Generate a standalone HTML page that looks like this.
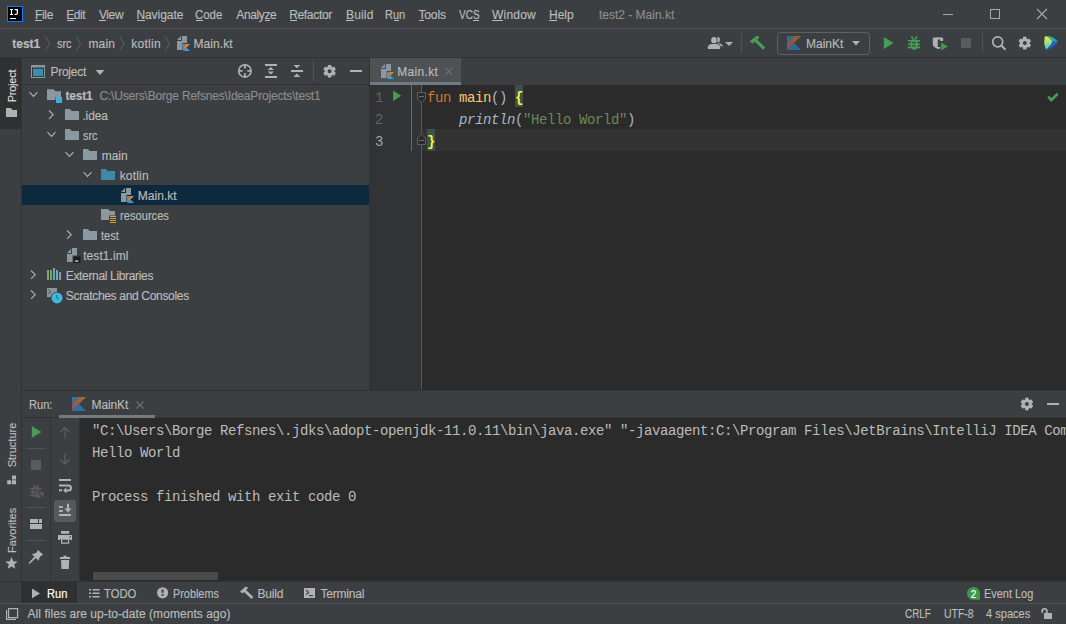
<!DOCTYPE html>
<html><head><meta charset="utf-8">
<style>
*{margin:0;padding:0;box-sizing:border-box}
html,body{width:1066px;height:624px;overflow:hidden;background:#3C3F41;font-family:"Liberation Sans",sans-serif;font-size:12px;color:#BBBBBB}
.a{position:absolute}
.t{position:absolute;line-height:14px;white-space:nowrap;-webkit-text-stroke:0.15px currentColor}
.m{position:absolute;font-family:"Liberation Mono",monospace;font-size:13px;line-height:22px;white-space:pre;color:#A9B7C6}
u{text-decoration:none;border-bottom:1px solid currentColor}
svg{position:absolute;overflow:visible}
</style></head><body>
<svg width="0" height="0" style="position:absolute">
<defs>
 <linearGradient id="kg" x1="1" y1="0" x2="0" y2="1"><stop offset="0" stop-color="#F88909"/><stop offset="0.7" stop-color="#EE6C3C"/><stop offset="1" stop-color="#D2459E"/></linearGradient>
 <linearGradient id="kgm" x1="1" y1="0" x2="0" y2="1"><stop offset="0" stop-color="#B8762A"/><stop offset="0.55" stop-color="#AE6440"/><stop offset="1" stop-color="#9C4CA6"/></linearGradient>
 <g id="ktf">
  <path d="M7 1H12V8H7.5V15H2V6H7Z" fill="#8B98A0"/>
  <path d="M2 5L6 1V5Z" fill="#8B98A0"/>
  <path d="M8 9h3.5L8 12.5z" fill="#1DA8E8"/>
  <path d="M11.5 9H15L8 16v-3.5z" fill="url(#kg)"/>
  <path d="M8 16l3.5-3.5L15 16z" fill="#1DA8E8"/>
 </g>
 <g id="kbig">
  <path d="M0 0h7L0 7z" fill="#2C80B5"/>
  <path d="M7 0h7L0 14V7z" fill="url(#kgm)"/>
  <path d="M0 14l7-7 7 7z" fill="#2A7DB1"/>
 </g>
<path id="gear" fill-rule="evenodd" d="M-2.19 -4.04 L-1.52 -6.32 L1.52 -6.32 L2.19 -4.04 L2.40 -3.92 L4.71 -4.47 L6.23 -1.85 L4.60 -0.12 L4.60 0.12 L6.23 1.85 L4.71 4.47 L2.40 3.92 L2.19 4.04 L1.52 6.32 L-1.52 6.32 L-2.19 4.04 L-2.40 3.92 L-4.71 4.47 L-6.23 1.85 L-4.60 0.12 L-4.60 -0.12 L-6.23 -1.85 L-4.71 -4.47 L-2.40 -3.92Z M2.0 0 A2.0 2.0 0 1 0 -2.0 0 A2.0 2.0 0 1 0 2.0 0Z"/>
<linearGradient id="jbg" x1="0" y1="0" x2="1" y2="1"><stop offset="0" stop-color="#F5E93B"/><stop offset="0.45" stop-color="#7BD67E"/><stop offset="1" stop-color="#0E8FD8"/></linearGradient>
<path id="fold" d="M0 0H4.8L6.8 2H14V11H0Z"/>
<linearGradient id="jbl" x1="0" y1="0" x2="0" y2="1"><stop offset="0" stop-color="#F4EE3A"/><stop offset="0.5" stop-color="#9FE07A"/><stop offset="1" stop-color="#2ACDE6"/></linearGradient>
<linearGradient id="jbt" x1="0" y1="0" x2="1" y2="1"><stop offset="0" stop-color="#3DD16A"/><stop offset="1" stop-color="#1C90D8"/></linearGradient>
</defs></svg>

<!-- ===== Menu bar ===== -->
<div class="a" style="left:0;top:28px;width:1066px;height:1px;background:#515151"></div>
<div class="a" style="left:7px;top:6px;width:16px;height:16px;background:#000;border:1px solid #087CFA"></div>
<svg style="left:0;top:0" width="1" height="1" fill="#FFFFFF"><path d="M10 9h3v1.1h-0.9v3.8h0.9V15h-3v-1.1h0.9v-3.8H10z"/><path d="M14.6 9h3.4v4q0 2-2 2h-1.4v-1.2h1.3q0.8 0 0.8-0.9v-2.7h-2.1z"/><rect x="10" y="18" width="6" height="1.1"/></svg>
<div class="t" style="left:35.0px;top:8px;letter-spacing:-0.33px">File</div>
<div class="t" style="left:66.2px;top:8px;letter-spacing:-0.4px">Edit</div>
<div class="t" style="left:98.9px;top:8px;letter-spacing:-0.37px">View</div>
<div class="t" style="left:136.4px;top:8px;letter-spacing:-0.06px">Navigate</div>
<div class="t" style="left:195.4px;top:8px;transform:scaleX(0.951);transform-origin:0 0">Code</div>
<div class="t" style="left:236.3px;top:8px;letter-spacing:-0.38px">Analyze</div>
<div class="t" style="left:289.2px;top:8px;letter-spacing:-0.33px">Refactor</div>
<div class="t" style="left:346.0px;top:8px;letter-spacing:0.17px">Build</div>
<div class="t" style="left:385.4px;top:8px;transform:scaleX(0.918);transform-origin:0 0">Run</div>
<div class="t" style="left:418.4px;top:8px;letter-spacing:-0.1px">Tools</div>
<div class="t" style="left:459px;top:8px;transform:scaleX(0.838);transform-origin:0 0">VCS</div>
<div class="t" style="left:492.0px;top:8px;letter-spacing:0.2px">Window</div>
<div class="t" style="left:549.0px;top:8px;letter-spacing:0.0px">Help</div>
<div class="t" style="left:599.0px;top:8px;color:#8C8C8C;letter-spacing:-0.01px">test2 - Main.kt</div>
<div class="a" style="left:35.3px;top:20px;width:6.4px;height:1px;background:#BBBBBB"></div><div class="a" style="left:66.5px;top:20px;width:7.0px;height:1px;background:#BBBBBB"></div><div class="a" style="left:99.2px;top:20px;width:6.8px;height:1px;background:#BBBBBB"></div><div class="a" style="left:136.7px;top:20px;width:8.0px;height:1px;background:#BBBBBB"></div><div class="a" style="left:195.7px;top:20px;width:7.6px;height:1px;background:#BBBBBB"></div><div class="a" style="left:264.7px;top:20px;width:5.0px;height:1px;background:#BBBBBB"></div><div class="a" style="left:289.5px;top:20px;width:7.7px;height:1px;background:#BBBBBB"></div><div class="a" style="left:346.3px;top:20px;width:7.6px;height:1px;background:#BBBBBB"></div><div class="a" style="left:393.6px;top:20px;width:5.5px;height:1px;background:#BBBBBB"></div><div class="a" style="left:418.7px;top:20px;width:5.3px;height:1px;background:#BBBBBB"></div><div class="a" style="left:473.3px;top:20px;width:6.1px;height:1px;background:#BBBBBB"></div><div class="a" style="left:492.3px;top:20px;width:10.9px;height:1px;background:#BBBBBB"></div><div class="a" style="left:549.3px;top:20px;width:8.1px;height:1px;background:#BBBBBB"></div>
<!-- window controls -->
<div class="a" style="left:943px;top:14px;width:10px;height:1px;background:#A8A8A8"></div>
<div class="a" style="left:990px;top:9px;width:10px;height:10px;border:1px solid #A8A8A8"></div>
<svg style="left:1037px;top:9px" width="10" height="10"><path d="M0 0L10 10M10 0L0 10" stroke="#A8A8A8" stroke-width="1.1"/></svg>

<!-- ===== Nav bar ===== -->
<div class="a" style="left:0;top:57px;width:1066px;height:1px;background:#323232"></div>
<div class="t" style="left:12.2px;top:37px;font-weight:bold;letter-spacing:0.02px">test1</div>
<svg style="left:0;top:0" width="1" height="1"><path d="M45.2 36.4l4.5 7.1l-4.5 7.1M76.2 36.4l4.5 7.1l-4.5 7.1M119.5 36.4l4.5 7.1l-4.5 7.1M165 36.4l4.5 7.1l-4.5 7.1" stroke="#5E6060" stroke-width="1" fill="none"/></svg>
<div class="t" style="left:57px;top:37px;transform:scaleX(0.906);transform-origin:0 0">src</div>
<div class="t" style="left:88.4px;top:37px;letter-spacing:0.2px">main</div>
<div class="t" style="left:131.3px;top:37px;letter-spacing:0.26px">kotlin</div>
<svg style="left:175px;top:35px" width="16" height="16"><use href="#ktf"/></svg>
<div class="t" style="left:193.5px;top:37px;letter-spacing:0.07px">Main.kt</div>

<!-- toolbar -->
<svg style="left:0;top:0" width="1" height="1">
 <ellipse cx="718" cy="39.6" rx="2" ry="2.7" fill="#AFB1B3"/>
 <path d="M716 43.2h3.5q3 0.6 3 2.6v0.8h-6.5z" fill="#AFB1B3"/>
 <g stroke="#3C3F41" stroke-width="1.6" paint-order="stroke">
 <ellipse cx="714" cy="40.2" rx="2.8" ry="3.2" fill="#AFB1B3"/>
 <path d="M707.8 49v-1.5q0-2.7 3.5-3.4h5.4q3.5 0.7 3.5 3.4v1.5z" fill="#AFB1B3"/>
 </g>
 <path d="M725 42h8l-4 4z" fill="#AFB1B3"/>
 <rect x="741" y="33" width="1" height="20" fill="#515151"/>
 <path d="M749.6 41.6L756.2 36.1L759.3 36.2L758.8 38.4L752.6 43.6Z" fill="#499C54"/>
 <path d="M755.3 39.8L764.2 48.6" stroke="#499C54" stroke-width="3.2"/>
 <rect x="777.5" y="32.5" width="92" height="22" rx="3" fill="none" stroke="#5E6060"/>
 <rect x="970" y="38" width="1" height="1" fill="none"/>
 <path d="M852 41h8l-4 4.5z" fill="#AFB1B3"/>
 <path d="M883.8 37v12l9.7-6z" fill="#499C54"/>
 <path d="M961 38h10v10h-10z" fill="#5B5B5B"/>
 <rect x="982" y="33" width="1" height="20" fill="#515151"/>
 <circle cx="997.7" cy="41.8" r="5" fill="none" stroke="#AFB1B3" stroke-width="1.7"/>
 <path d="M1001.3 45.5l4.2 4.2" stroke="#AFB1B3" stroke-width="2"/>
</svg>
<svg style="left:787px;top:36px;opacity:0.7" width="14" height="14"><use href="#kbig"/></svg>
<div class="t" style="left:806.0px;top:37px;letter-spacing:0.0px">MainKt</div>
<svg style="left:0;top:0" width="1" height="1">
 <path d="M911.5 36.3L913 39M916.9 36.3L915.4 39" stroke="#499C54" stroke-width="1.7"/>
 <ellipse cx="914.2" cy="44.4" rx="3.9" ry="5.3" fill="#499C54"/>
 <path d="M907.8 40.8h12.2M907.8 44.2h12.2M907.8 47.4h12.2" stroke="#499C54" stroke-width="1.6"/>
 <path d="M912.2 42.6h3.5M912.2 45.8h3.5" stroke="#3C3F41" stroke-width="1.2"/>
 <path d="M932.8 37.8Q938 36.8 943.1 37.8L943.1 40.9L940.2 40.9L940.2 39.4L937.8 39.4L937.8 47.1L940.4 47.1L940.4 48.6Q937.5 49.6 935 47.5Q932.8 46 932.8 44.5Z" fill="#AFB1B3"/>
 <path d="M940.8 42L940.8 51L948.2 46.5Z" fill="#499C54" stroke="#3C3F41" stroke-width="0.7"/>
 <use href="#gear" transform="translate(1024.8 43.1)" fill="#AFB1B3"/>
 <path d="M1045 36Q1051 38 1052.3 41.8Q1051 45.5 1046 49.8Q1043 43 1045 36Z" fill="url(#jbl)"/>
 <path d="M1045 36Q1053 35.5 1058.2 41.8L1052.3 41.8Q1051 38 1045 36Z" fill="url(#jbt)"/>
 <path d="M1052.3 41.8L1058.2 41.8Q1054 47.5 1046 49.8Q1051 45.5 1052.3 41.8Z" fill="#2364CC"/>
</svg>

<!-- ===== Left stripe ===== -->
<div class="a" style="left:21px;top:58px;width:1px;height:523px;background:#323232"></div>

<!-- ===== Project panel ===== -->
<div class="a" style="left:22px;top:84px;width:347px;height:1px;background:#323232"></div>
<div class="a" style="left:22px;top:185px;width:347px;height:20px;background:#0D293E"></div>
<div class="a" style="left:0;top:58px;width:21px;height:71px;background:#2E3032"></div>
<div class="t" style="left:-5px;top:78.6px;width:34px;font-size:11px;color:#DCDCDC;transform:rotate(-90deg);transform-origin:17px 7px;text-align:center;letter-spacing:-0.25px">Project</div>
<svg style="left:0;top:0" width="1" height="1"><path d="M6 108h5l1.5 2H17v7H6z" fill="#AFB1B3"/></svg>
<svg style="left:0;top:0" width="1" height="1">
 <rect x="31" y="65" width="14" height="13" fill="#8B98A0"/>
 <rect x="32" y="67.5" width="12" height="9.5" fill="#2E3133"/>
 <rect x="33" y="68.7" width="10" height="7.5" fill="#3D8DAF"/>
 <path d="M95.7 70h8.7l-4.35 5z" fill="#AFB1B3"/>
 <circle cx="244.9" cy="70.9" r="6.2" fill="none" stroke="#AFB1B3" stroke-width="1.6"/>
 <path d="M244.9 64.5v4M244.9 73.3v4M238.5 70.9h4M247.3 70.9h4" stroke="#AFB1B3" stroke-width="1.8"/>
 <path d="M265 65h12M265 77h12M291 71h12" stroke="#AFB1B3" stroke-width="2"/>
 <path d="M267.6 70.1h6.4l-3.2-3zM267.6 71.6h6.4l-3.2 3z" fill="#AFB1B3"/>
 <path d="M293.5 64.9h6.8l-3.4 3.4zM293.5 77.1h6.8l-3.4-3.6z" fill="#AFB1B3"/>
 <rect x="313" y="61" width="1" height="20" fill="#515151"/>
 <use href="#gear" transform="translate(329.6 71.2)" fill="#AFB1B3"/>
 <rect x="350" y="70" width="12" height="2" fill="#AFB1B3"/>
</svg>
<div class="t" style="left:50.4px;top:65px;letter-spacing:-0.23px">Project</div>

<!-- tree -->
<svg style="left:0;top:0" width="1" height="1" fill="none" stroke="#AFB1B3" stroke-width="1.1">
 <path d="M29.5 92.2l4 4.2l4-4.2"/>
 <path d="M49 110.5l4.2 4.2l-4.2 4.2"/>
 <path d="M47.5 132.2l4 4.2l4-4.2"/>
 <path d="M65.5 152.2l4 4.2l4-4.2"/>
 <path d="M83.5 172.2l4 4.2l4-4.2"/>
 <path d="M67 230.5l4.2 4.2l-4.2 4.2"/>
 <path d="M31 270.5l4.2 4.2l-4.2 4.2"/>
 <path d="M31 290.5l4.2 4.2l-4.2 4.2"/>
</svg>
<svg style="left:0;top:0" width="1" height="1" fill="#8B98A0">
 <path d="M47 89.2h6.4l2 2H61V97H55.5V100H47z"/>
 <rect x="56" y="97" width="6" height="6" fill="#3FB0DC"/>
 <use href="#fold" transform="translate(65 109)"/>
 <use href="#fold" transform="translate(65 129)"/>
 <use href="#fold" transform="translate(83 149)"/>
 <use href="#fold" transform="translate(101 169)" fill="#3D8AA8"/>
 <path d="M101 209h7l2 2h5v4.5h-6v4.5h-8z"/>
 <path d="M110 216.5h6M110 218.5h6M110 220.5h6M110 222.5h6" stroke="#D9A343" stroke-width="1"/>
 <use href="#fold" transform="translate(83 229)"/>
 <path d="M72 248h5v7.5h-4.5v6.5H67V254h5z"/>
 <path d="M67 253l4-4v4z"/>
 <rect x="73.5" y="256.5" width="7" height="6.5" fill="#1B1B1B"/>
 <rect x="75" y="260.5" width="3.5" height="1.2" fill="#E0E0E0"/>
 <rect x="47" y="270" width="2" height="10"/>
 <rect x="50" y="270" width="2" height="10" fill="#62B543"/>
 <rect x="53" y="268" width="2" height="12"/>
 <rect x="56" y="270" width="2" height="10" fill="#40B6E0"/>
 <rect x="59" y="272" width="2" height="8"/>
 <path d="M47 288h10v4.5q-3.5 0.5-4.5 4.5H47z"/>
 <path d="M48.4 289.6L50.7 291.9L48.4 294.2" stroke="#3C3F41" stroke-width="1" fill="none"/>
 <circle cx="57" cy="297.9" r="5.5" fill="#40B6E0" stroke="#3C3F41" stroke-width="1.4" paint-order="stroke"/>
 <path d="M56.8 295v2.6l1.8 1.8" stroke="#2A5E78" stroke-width="1" fill="none"/>
</svg>
<svg style="left:119px;top:187px" width="16" height="16"><use href="#ktf"/></svg>
<div class="t" style="left:65.5px;top:89px;font-weight:bold;letter-spacing:-0.18px">test1</div>
<div class="t" style="left:99.4px;top:89px;color:#8C8C8C;letter-spacing:-0.19px">C:\Users\Borge Refsnes\IdeaProjects\test1</div>
<div class="t" style="left:82.4px;top:109px;letter-spacing:-0.1px">.idea</div>
<div class="t" style="left:83.4px;top:129px;transform:scaleX(0.912);transform-origin:0 0">src</div>
<div class="t" style="left:101.8px;top:149px;letter-spacing:-0.07px">main</div>
<div class="t" style="left:119.7px;top:169px;letter-spacing:0.18px">kotlin</div>
<div class="t" style="left:137.7px;top:189px;letter-spacing:0.05px">Main.kt</div>
<div class="t" style="left:119.7px;top:209px;transform:scaleX(0.929);transform-origin:0 0">resources</div>
<div class="t" style="left:101.2px;top:229px;transform:scaleX(0.922);transform-origin:0 0">test</div>
<div class="t" style="left:83.2px;top:249px;letter-spacing:0.07px">test1.iml</div>
<div class="t" style="left:65.8px;top:269px;letter-spacing:-0.34px">External Libraries</div>
<div class="t" style="left:65.8px;top:289px;letter-spacing:-0.32px">Scratches and Consoles</div>

<!-- ===== Editor ===== -->
<div class="a" style="left:369px;top:58px;width:1px;height:332px;background:#323232"></div>
<div class="a" style="left:370px;top:85px;width:696px;height:305px;background:#2B2B2B"></div>
<div class="a" style="left:370px;top:85px;width:52px;height:305px;background:#313335"></div>
<div class="a" style="left:422px;top:129px;width:644px;height:22px;background:#323232"></div>
<!-- tab -->
<div class="a" style="left:370px;top:58px;width:91px;height:24px;background:#4E5254"></div>
<div class="a" style="left:370px;top:82px;width:91px;height:3px;background:#747A80"></div>
<svg style="left:379px;top:63px" width="16" height="16"><use href="#ktf"/></svg>
<div class="t" style="left:397.2px;top:65px;letter-spacing:0.32px">Main.kt</div>
<svg style="left:0;top:0" width="1" height="1"><path d="M445.3 67.8l7 7M452.3 67.8l-7 7" stroke="#6E7173" stroke-width="1.1"/></svg>
<!-- gutter -->
<div class="m" style="left:375px;top:87px;font-size:14px;color:#606366">1
2
<span style="color:#A4A3A3">3</span></div>
<svg style="left:0;top:0" width="1" height="1">
 <path d="M393.1 90.4v10.9l8.1-5.45z" fill="#499C54"/>
 <rect x="411" y="85" width="1" height="66" fill="#4A7A76"/>
 <rect x="421" y="85" width="1" height="305" fill="#555758"/>
 <path d="M417.5 92.5h8v6.5l-4 3.8l-4-3.8z" fill="#2B2B2B" stroke="#5E6163" stroke-width="1"/>
 <path d="M419 96.5h5" stroke="#6E7173" stroke-width="1"/>
 <path d="M417.5 144.5h-0v-6.5l4-3.8l4 3.8v6.5z" fill="#2B2B2B" stroke="#5E6163" stroke-width="1"/>
 <path d="M419 140.5h5" stroke="#6E7173" stroke-width="1"/>
 <path d="M1048.2 96.8L1051.4 100L1057.6 93.8" stroke="#499C54" stroke-width="2.7" fill="none"/>
</svg>
<div class="a" style="left:515px;top:85px;width:8px;height:22px;background:#3B514D"></div>
<div class="a" style="left:427px;top:129px;width:8px;height:22px;background:#3B514D"></div>
<div class="m" style="left:427px;top:87px;font-size:14px;letter-spacing:-0.4px"><span style="color:#CC7832">fun</span> <span style="color:#FFC66D">main</span>() <span style="color:#FFEF28;font-weight:bold">{</span>
    <i>println</i>(<span style="color:#6A8759">"Hello World"</span>)
<span style="color:#FFEF28;font-weight:bold">}</span></div>

<!-- ===== Run panel ===== -->
<div class="a" style="left:22px;top:390px;width:1044px;height:1px;background:#323232"></div>
<div class="a" style="left:22px;top:417px;width:1044px;height:1px;background:#323232"></div>
<div class="a" style="left:79px;top:418px;width:987px;height:163px;background:#2B2B2B"></div>
<div class="a" style="left:50px;top:418px;width:1px;height:163px;background:#323232"></div>
<div class="a" style="left:79px;top:418px;width:1px;height:163px;background:#323232"></div>
<div class="t" style="left:28.5px;top:398px;transform:scaleX(0.921);transform-origin:0 0">Run:</div>
<svg style="left:72px;top:397px;opacity:0.85" width="14" height="14"><use href="#kbig"/></svg>
<div class="t" style="left:91.6px;top:398px;letter-spacing:-0.12px">MainKt</div>
<svg style="left:0;top:0" width="1" height="1">
 <path d="M136.5 401.5l7 7M143.5 401.5l-7 7" stroke="#6E7173" stroke-width="1.1"/>
 <use href="#gear" transform="translate(1026.9 404)" fill="#AFB1B3"/>
 <rect x="1047" y="403" width="12" height="2" fill="#AFB1B3"/>
</svg>
<div class="a" style="left:59px;top:415px;width:96px;height:3px;background:#747A80"></div>
<!-- run toolbar -->
<svg style="left:0;top:0" width="1" height="1">
 <path d="M31.8 426v11.8l9.7-5.9z" fill="#499C54"/>
 <rect x="26" y="448" width="20" height="1" fill="#4F5254"/>
 <rect x="31" y="460" width="10" height="10" fill="#5B5B5B"/>
 <path d="M33.5 484.8L35 487.3M38.5 484.8L37 487.3" stroke="#5B5B5B" stroke-width="1.6"/>
 <ellipse cx="35.8" cy="492" rx="3.6" ry="5.2" fill="#5B5B5B"/>
 <path d="M30 488.6H41.8M30 492.2H39M30 495.5H37" stroke="#5B5B5B" stroke-width="1.6"/>
 <path d="M33.6 490.4H37.6M33.6 493.9H36.5" stroke="#3C3F41" stroke-width="1.1"/>
 <g stroke="#3C3F41" paint-order="stroke" stroke-width="1.4">
 <path d="M37.8 498.2L41.6 494.4" stroke="#5B5B5B" stroke-width="1.9"/>
 <path d="M38.4 492.1H43.7V497.5Z" fill="#5B5B5B"/>
 </g>
 <rect x="26" y="507" width="20" height="1" fill="#4F5254"/>
 <path d="M30 519h8v4h-8zM39 519h3v4h-3zM30 524h12v5h-12z" fill="#AFB1B3"/>
 <rect x="26" y="540" width="20" height="1" fill="#4F5254"/>
 <path d="M38 550L43.2 554.8L40 556.4L38.4 560.8L35.9 558L29.5 563.9L28.6 563L34.5 556.6L31.8 554.3L36.2 553Z" fill="#AFB1B3"/>
 <path d="M65 427.5v11M60.5 432l4.5-4.5l4.5 4.5" stroke="#5B5B5B" stroke-width="1.4" fill="none"/>
 <path d="M65 453v11M60.5 459.5l4.5 4.5l4.5-4.5" stroke="#5B5B5B" stroke-width="1.4" fill="none"/>
 <path d="M59 479.9h12M59 485.4h9.2q2.8 0 2.8 2.5t-2.8 2.5h-2.6M59 490.2h3" stroke="#AFB1B3" stroke-width="2" fill="none"/>
 <path d="M66.4 487.2l-3.2 3.2l3.2 3.2z" fill="#AFB1B3"/>
 <rect x="54" y="500" width="22" height="22" rx="3" fill="#55595C"/>
 <path d="M59 506.9h3.8M59 511.1h3.8M59 515.1h12" stroke="#AFB1B3" stroke-width="2"/>
 <path d="M68 503.8v5.5" stroke="#AFB1B3" stroke-width="2"/>
 <path d="M64.4 508.4h7.2l-3.6 4.2z" fill="#AFB1B3"/>
 <path d="M61 531h8.2v2.8h-8.2zM58 535h14v5h-2v-1h-10v1h-2z" fill="#AFB1B3"/>
 <path d="M61.6 539.2h7v4h-7z" fill="none" stroke="#AFB1B3" stroke-width="1.2"/>
 <rect x="69.6" y="536" width="1.2" height="1.2" fill="#3C3F41"/>
 <path d="M60 557h10v2h-10zM63.3 555.8h3.3v1.5h-3.3zM61 560h8.2l-0.4 8.6q0 0.5-0.5 0.5h-6.4q-0.5 0-0.5-0.5z" fill="#AFB1B3"/>
</svg>
<!-- console -->
<div class="m" style="left:92px;top:420px;color:#BBBBBB;font-size:14px;letter-spacing:-0.4px">"C:\Users\Borge Refsnes\.jdks\adopt-openjdk-11.0.11\bin\java.exe" "-javaagent:C:\Program Files\JetBrains\IntelliJ IDEA Community Edition 2021.1.2\lib\idea_rt.jar=
Hello World

Process finished with exit code 0</div>
<div class="a" style="left:93px;top:572px;width:125px;height:8px;background:#4A4A4A;border-radius:1px"></div>

<!-- ===== Bottom stripe + status ===== -->
<div class="a" style="left:0;top:581px;width:1066px;height:1px;background:#323232"></div>
<div class="a" style="left:0;top:603px;width:1066px;height:1px;background:#515151"></div>
<div class="a" style="left:21px;top:582px;width:56px;height:21px;background:#2E3032"></div>
<svg style="left:0;top:0" width="1" height="1">
 <path d="M32 588.6v9.6l8-4.8z" fill="#AFB1B3"/>
 <path d="M89 589.8h2M89 593.3h2M89 596.8h2M92.5 589.8h7M92.5 593.3h7M92.5 596.8h7" stroke="#AFB1B3" stroke-width="1.6"/>
 <circle cx="162.6" cy="592.8" r="5.6" fill="#AFB1B3"/>
 <path d="M162.6 589.4v3.4M162.6 594v1.8" stroke="#3C3F41" stroke-width="2"/>
 <path d="M240 591.6L245.6 586.8L247.9 587.2L247.4 588.8L242.4 593.4Z" fill="#AFB1B3"/>
 <path d="M244.2 590.2L252.4 598" stroke="#AFB1B3" stroke-width="2.8"/>
 <rect x="304" y="588" width="11" height="10" fill="#AFB1B3"/>
 <path d="M306.2 590.2L308.6 592.4L306.2 594.6" stroke="#3C3F41" stroke-width="1.2" fill="none"/>
 <rect x="309.1" y="595" width="3.8" height="1.2" fill="#3C3F41"/>
 <path d="M973.4 587a6.4 6.4 0 1 0 0 12.8h6.6v-6.4a6.4 6.4 0 0 0-6.6-6.4z" fill="#3C9A4A"/>
 <path d="M8.6 608.6h9v9h-9z" fill="none" stroke="#AFB1B3" stroke-width="1.2"/>
 <path d="M6.6 610v9.4h9.4" fill="none" stroke="#AFB1B3" stroke-width="1.2"/>
 <path d="M1044 613h8v6h-8z" fill="#AFB1B3"/>
 <path d="M1042.2 612.8V611.2A2.3 2.3 0 0 1 1046.8 611.2V613" fill="none" stroke="#AFB1B3" stroke-width="1.8"/>
</svg>
<div class="t" style="left:47.3px;top:587px;color:#FFFFFF;transform:scaleX(0.923);transform-origin:0 0">Run</div>
<div class="t" style="left:104px;top:587px;transform:scaleX(0.936);transform-origin:0 0">TODO</div>
<div class="t" style="left:173.4px;top:587px;transform:scaleX(0.905);transform-origin:0 0">Problems</div>
<div class="t" style="left:257.5px;top:587px;letter-spacing:-0.17px">Build</div>
<div class="t" style="left:320.5px;top:587px;letter-spacing:-0.21px">Terminal</div>
<div class="t" style="left:970.8px;top:588px;font-size:10px;color:#FFFFFF">2</div>
<div class="t" style="left:984.4px;top:587px;transform:scaleX(0.911);transform-origin:0 0">Event Log</div>
<div class="t" style="left:27.5px;top:607px;letter-spacing:0.06px">All files are up-to-date (moments ago)</div>
<div class="t" style="left:904.9px;top:607px;transform:scaleX(0.825);transform-origin:0 0">CRLF</div>
<div class="t" style="left:943.7px;top:607px;transform:scaleX(0.873);transform-origin:0 0">UTF-8</div>
<div class="t" style="left:985.8px;top:607px;transform:scaleX(0.921);transform-origin:0 0">4 spaces</div>
<!-- left stripe lower -->
<div class="t" style="left:-11px;top:438px;width:46px;font-size:11px;transform:rotate(-90deg);transform-origin:23px 7px;text-align:center">Structure</div>
<div class="t" style="left:-10px;top:524px;width:44px;font-size:11px;transform:rotate(-90deg);transform-origin:22px 7px;text-align:center">Favorites</div>
<svg style="left:0;top:0" width="1" height="1">
 <path d="M12 475.4h4v4h-4zM7.2 480.2h4v4h-4zM12 480.2h4v4h-4z" fill="#AFB1B3"/>
 <path d="M11.5 557l1.7 4.2l4.5 0.3l-3.5 2.9l1.1 4.4l-3.8-2.4l-3.8 2.4l1.1-4.4l-3.5-2.9l4.5-0.3z" fill="#AFB1B3"/>
</svg>

</body></html>
